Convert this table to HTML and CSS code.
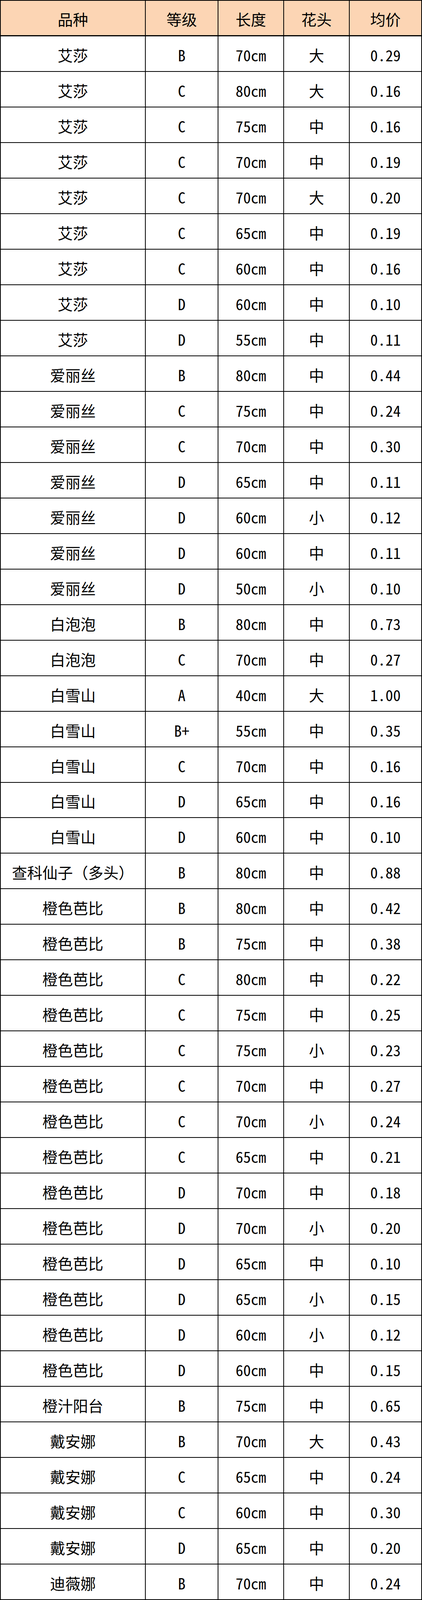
FILE: index.html
```html
<!DOCTYPE html>
<html lang="zh-CN">
<head>
<meta charset="utf-8">
<title>品种价格表</title>
<link rel="stylesheet" href="styles.css">
</head>
<body>
<div class="sheet">
  <div class="cell head">品种</div><div class="cell head">等级</div><div class="cell head">长度</div><div class="cell head">花头</div><div class="cell head">均价</div>
  <div class="cell">艾莎</div><div class="cell">B</div><div class="cell">70cm</div><div class="cell">大</div><div class="cell">0.29</div>
  <div class="cell">艾莎</div><div class="cell">C</div><div class="cell">80cm</div><div class="cell">大</div><div class="cell">0.16</div>
  <div class="cell">艾莎</div><div class="cell">C</div><div class="cell">75cm</div><div class="cell">中</div><div class="cell">0.16</div>
  <div class="cell">艾莎</div><div class="cell">C</div><div class="cell">70cm</div><div class="cell">中</div><div class="cell">0.19</div>
  <div class="cell">艾莎</div><div class="cell">C</div><div class="cell">70cm</div><div class="cell">大</div><div class="cell">0.20</div>
  <div class="cell">艾莎</div><div class="cell">C</div><div class="cell">65cm</div><div class="cell">中</div><div class="cell">0.19</div>
  <div class="cell">艾莎</div><div class="cell">C</div><div class="cell">60cm</div><div class="cell">中</div><div class="cell">0.16</div>
  <div class="cell">艾莎</div><div class="cell">D</div><div class="cell">60cm</div><div class="cell">中</div><div class="cell">0.10</div>
  <div class="cell">艾莎</div><div class="cell">D</div><div class="cell">55cm</div><div class="cell">中</div><div class="cell">0.11</div>
  <div class="cell">爱丽丝</div><div class="cell">B</div><div class="cell">80cm</div><div class="cell">中</div><div class="cell">0.44</div>
  <div class="cell">爱丽丝</div><div class="cell">C</div><div class="cell">75cm</div><div class="cell">中</div><div class="cell">0.24</div>
  <div class="cell">爱丽丝</div><div class="cell">C</div><div class="cell">70cm</div><div class="cell">中</div><div class="cell">0.30</div>
  <div class="cell">爱丽丝</div><div class="cell">D</div><div class="cell">65cm</div><div class="cell">中</div><div class="cell">0.11</div>
  <div class="cell">爱丽丝</div><div class="cell">D</div><div class="cell">60cm</div><div class="cell">小</div><div class="cell">0.12</div>
  <div class="cell">爱丽丝</div><div class="cell">D</div><div class="cell">60cm</div><div class="cell">中</div><div class="cell">0.11</div>
  <div class="cell">爱丽丝</div><div class="cell">D</div><div class="cell">50cm</div><div class="cell">小</div><div class="cell">0.10</div>
  <div class="cell">白泡泡</div><div class="cell">B</div><div class="cell">80cm</div><div class="cell">中</div><div class="cell">0.73</div>
  <div class="cell">白泡泡</div><div class="cell">C</div><div class="cell">70cm</div><div class="cell">中</div><div class="cell">0.27</div>
  <div class="cell">白雪山</div><div class="cell">A</div><div class="cell">40cm</div><div class="cell">大</div><div class="cell">1.00</div>
  <div class="cell">白雪山</div><div class="cell">B+</div><div class="cell">55cm</div><div class="cell">中</div><div class="cell">0.35</div>
  <div class="cell">白雪山</div><div class="cell">C</div><div class="cell">70cm</div><div class="cell">中</div><div class="cell">0.16</div>
  <div class="cell">白雪山</div><div class="cell">D</div><div class="cell">65cm</div><div class="cell">中</div><div class="cell">0.16</div>
  <div class="cell">白雪山</div><div class="cell">D</div><div class="cell">60cm</div><div class="cell">中</div><div class="cell">0.10</div>
  <div class="cell">查科仙子（多头）</div><div class="cell">B</div><div class="cell">80cm</div><div class="cell">中</div><div class="cell">0.88</div>
  <div class="cell">橙色芭比</div><div class="cell">B</div><div class="cell">80cm</div><div class="cell">中</div><div class="cell">0.42</div>
  <div class="cell">橙色芭比</div><div class="cell">B</div><div class="cell">75cm</div><div class="cell">中</div><div class="cell">0.38</div>
  <div class="cell">橙色芭比</div><div class="cell">C</div><div class="cell">80cm</div><div class="cell">中</div><div class="cell">0.22</div>
  <div class="cell">橙色芭比</div><div class="cell">C</div><div class="cell">75cm</div><div class="cell">中</div><div class="cell">0.25</div>
  <div class="cell">橙色芭比</div><div class="cell">C</div><div class="cell">75cm</div><div class="cell">小</div><div class="cell">0.23</div>
  <div class="cell">橙色芭比</div><div class="cell">C</div><div class="cell">70cm</div><div class="cell">中</div><div class="cell">0.27</div>
  <div class="cell">橙色芭比</div><div class="cell">C</div><div class="cell">70cm</div><div class="cell">小</div><div class="cell">0.24</div>
  <div class="cell">橙色芭比</div><div class="cell">C</div><div class="cell">65cm</div><div class="cell">中</div><div class="cell">0.21</div>
  <div class="cell">橙色芭比</div><div class="cell">D</div><div class="cell">70cm</div><div class="cell">中</div><div class="cell">0.18</div>
  <div class="cell">橙色芭比</div><div class="cell">D</div><div class="cell">70cm</div><div class="cell">小</div><div class="cell">0.20</div>
  <div class="cell">橙色芭比</div><div class="cell">D</div><div class="cell">65cm</div><div class="cell">中</div><div class="cell">0.10</div>
  <div class="cell">橙色芭比</div><div class="cell">D</div><div class="cell">65cm</div><div class="cell">小</div><div class="cell">0.15</div>
  <div class="cell">橙色芭比</div><div class="cell">D</div><div class="cell">60cm</div><div class="cell">小</div><div class="cell">0.12</div>
  <div class="cell">橙色芭比</div><div class="cell">D</div><div class="cell">60cm</div><div class="cell">中</div><div class="cell">0.15</div>
  <div class="cell">橙汁阳台</div><div class="cell">B</div><div class="cell">75cm</div><div class="cell">中</div><div class="cell">0.65</div>
  <div class="cell">戴安娜</div><div class="cell">B</div><div class="cell">70cm</div><div class="cell">大</div><div class="cell">0.43</div>
  <div class="cell">戴安娜</div><div class="cell">C</div><div class="cell">65cm</div><div class="cell">中</div><div class="cell">0.24</div>
  <div class="cell">戴安娜</div><div class="cell">C</div><div class="cell">60cm</div><div class="cell">中</div><div class="cell">0.30</div>
  <div class="cell">戴安娜</div><div class="cell">D</div><div class="cell">65cm</div><div class="cell">中</div><div class="cell">0.20</div>
  <div class="cell">迪薇娜</div><div class="cell">B</div><div class="cell">70cm</div><div class="cell">中</div><div class="cell">0.24</div>
</div>
</body>
</html>
```

FILE: styles.css
```css
html, body {
  margin: 0;
  padding: 0;
  background: #ffffff;
}

.sheet {
  display: grid;
  grid-template-columns: 369px 184px 166px 166px 183px;
  grid-template-rows: repeat(45, minmax(0, 1fr));
  gap: 2px;
  padding: 2px;
  width: 1080px;
  height: 100vh;
  box-sizing: border-box;
  overflow: hidden;
  background: #000000;
  font-family: "Noto Sans Mono CJK SC", "Noto Sans CJK SC", "Liberation Mono", monospace;
  font-size: 39px;
  color: #000000;
}

.cell {
  background: #ffffff;
  display: flex;
  align-items: center;
  justify-content: center;
  padding-top: 6px;
  box-sizing: border-box;
  white-space: nowrap;
  line-height: 1;
  min-height: 0;
}

.head {
  background: #fcd5b4;
  padding-top: 4px;
  box-shadow: inset 0 -1px 0 #000000;
}
```
